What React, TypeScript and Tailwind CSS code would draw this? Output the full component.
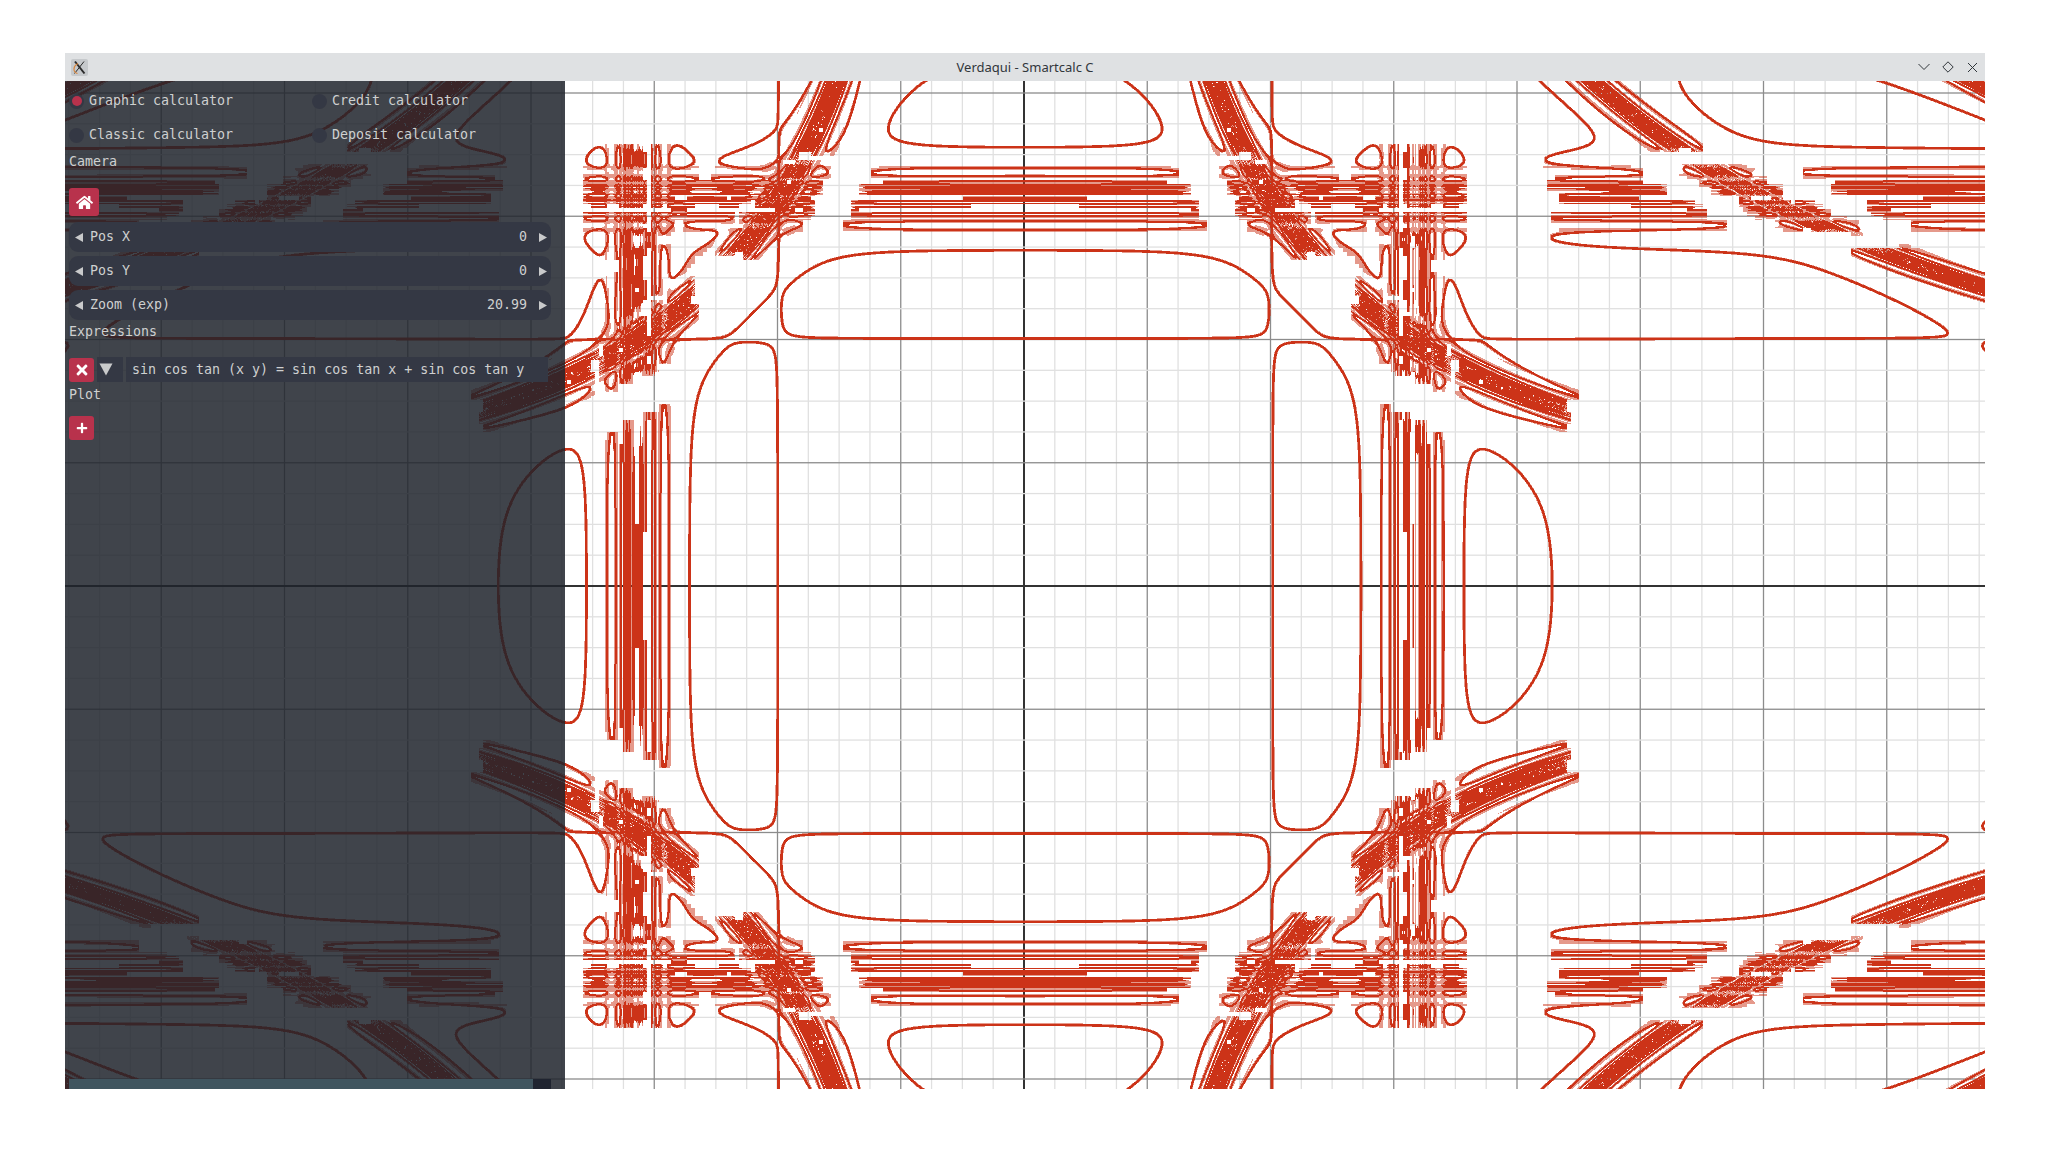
import React, { useMemo } from 'react';
import { FaHome, FaTimes, FaPlus } from 'react-icons/fa';

const WIDTH = 1920;
const HEIGHT = 1008;
const ORIGIN_X = 959;
const ORIGIN_Y = 505;
const CURVE_X = 960.2;
const SCALE = 246.5;
const LINE_HALF = 1.4;
const CELL = 4;
const PALE_GRADIENT = 0.2;
const LEVELS = [0.5, 1];

const sct = (v: number) => Math.sin(Math.cos(Math.tan(v)));
const equation = (x: number, y: number) => sct(x * y) - sct(x) - sct(y);

// coarse cells first (a cell with no sign change on its corners is skipped),
// then value / gradient per pixel inside the cells that are left
const buildCurve = () => {
  const cols = Math.ceil(WIDTH / CELL) + 4;
  const rows = Math.ceil(HEIGHT / CELL) + 4;
  const firstCol = Math.floor(CURVE_X / CELL) + 2;
  const firstRow = Math.floor(ORIGIN_Y / CELL) + 2;
  const signs = new Int8Array((cols + 1) * (rows + 1));
  for (let b = 0; b <= rows; b++) {
    for (let a = 0; a <= cols; a++) {
      const x = ((a - firstCol) * CELL) / SCALE;
      const y = ((firstRow - b) * CELL) / SCALE;
      signs[b * (cols + 1) + a] = equation(x, y) > 0 ? 1 : 0;
    }
  }
  const active = new Uint8Array(cols * rows);
  for (let b = 0; b < rows; b++) {
    for (let a = 0; a < cols; a++) {
      const k = b * (cols + 1) + a;
      const sum = signs[k] + signs[k + 1] + signs[k + cols + 1] + signs[k + cols + 2];
      if (sum > 0 && sum < 4) active[b * cols + a] = 1;
    }
  }
  const isActive = (px: number, py: number) => {
    const a = Math.floor((px - CURVE_X) / CELL) + firstCol;
    const b = Math.floor((py - ORIGIN_Y) / CELL) + firstRow;
    return active[b * cols + a] === 1;
  };

  const w = WIDTH + 2;
  const h = HEIGHT + 2;
  const values = new Float64Array(w * h);
  for (let j = 0; j < h; j++) {
    const y = (ORIGIN_Y - (j - 0.5)) / SCALE;
    for (let i = 0; i < w; i++) {
      values[j * w + i] = equation((i - 0.5 - CURVE_X) / SCALE, y);
    }
  }
  const paths = LEVELS.map(() => [] as string[]);
  const pad = 2;
  for (let j = 1; j <= HEIGHT; j++) {
    let runLevel = -1;
    let runStart = 0;
    for (let i = 1; i <= WIDTH + 1; i++) {
      let level = -1;
      if (i <= WIDTH) {
        const px = i - 0.5;
        const py = j - 0.5;
        if (
          isActive(px - pad, py - pad) ||
          isActive(px + pad, py - pad) ||
          isActive(px - pad, py + pad) ||
          isActive(px + pad, py + pad)
        ) {
          const k = j * w + i;
          const v = values[k];
          const fx = (values[k + 1] - values[k - 1]) / 2;
          const fy = (values[k + w] - values[k - w]) / 2;
          const grad = Math.sqrt(fx * fx + fy * fy);
          const alpha = LINE_HALF + 0.5 - Math.abs(v) / (grad + 1e-9);
          const crosses = v * values[k + 1] < 0 || v * values[k - 1] < 0 || v * values[k + w] < 0 || v * values[k - w] < 0;
          if (alpha >= 0.75 || crosses) level = 1;
          else if (alpha >= 0.25 || grad > PALE_GRADIENT) level = 0;
        }
      }
      if (level !== runLevel) {
        if (runLevel >= 0) {
          paths[runLevel].push(`M${runStart - 1} ${j - 1}h${i - runStart}v1h${runStart - i}z`);
        }
        runLevel = level;
        runStart = i;
      }
    }
  }
  return paths.map((p) => p.join(''));
};

const gridLines = (origin: number, size: number) => {
  const lines: { pos: number; index: number }[] = [];
  const step = (SCALE * 0.5) / 4;
  const count = Math.ceil(Math.max(origin, size) / step) + 1;
  for (let n = -count; n <= count; n++) {
    const pos = origin + n * step;
    if (pos > -2 && pos < size + 2) lines.push({ pos, index: n });
  }
  return lines;
};

const lineStyle = (index: number) => {
  if (index === 0) return { fill: '#333333', size: 2 };
  if (index % 4 === 0) return { fill: '#8c8c8c', size: 1.3 };
  return { fill: '#e0e0e0', size: 1.3 };
};

const PlotCanvas = () => {
  const curve = useMemo(buildCurve, []);
  return (
    <svg className="absolute inset-0" width={WIDTH} height={HEIGHT} viewBox={`0 0 ${WIDTH} ${HEIGHT}`}>
      {gridLines(ORIGIN_X, WIDTH).map((l) => {
        const s = lineStyle(l.index);
        return <rect key={`v${l.index}`} x={l.pos - s.size / 2} y={0} width={s.size} height={HEIGHT} fill={s.fill} />;
      })}
      {gridLines(ORIGIN_Y, HEIGHT).map((l) => {
        const s = lineStyle(l.index);
        return <rect key={`h${l.index}`} x={0} y={l.pos - s.size / 2} width={WIDTH} height={s.size} fill={s.fill} />;
      })}
      {curve.map((d, n) => (
        <path key={n} d={d} fill="#cc3318" fillOpacity={LEVELS[n]} shapeRendering="crispEdges" />
      ))}
    </svg>
  );
};

const WindowLogo = () => (
  <div className="flex h-[17px] w-[17px] items-center justify-center rounded-[2px] bg-[#c6c9cc]">
    <svg width="15" height="15" viewBox="0 0 15 15" fill="none">
      <path d="M3 1.5 L12.5 13.5" stroke="#2a2a2a" strokeWidth="2" />
      <path d="M12 1.5 L2.5 13.5" stroke="#2a2a2a" strokeWidth="1" />
      <path d="M6 3.5 C1 6 0.5 12 5.5 13.5" stroke="#d8853b" strokeWidth="1.2" />
    </svg>
  </div>
);

const TitleBar = () => (
  <div className="relative flex h-[28px] items-center justify-center bg-[#dfe1e3] pt-[1px]">
    <div className="absolute left-[6px] top-[6px]">
      <WindowLogo />
    </div>
    <span className="font-['Noto_Sans',sans-serif] text-[13px] text-[#31363b]">Verdaqui - Smartcalc C</span>
    <div className="absolute right-0 top-0 flex h-full items-center">
      <svg className="absolute right-[55px] top-[9px]" width="12" height="10" viewBox="0 0 12 10" fill="none" stroke="#31363b">
        <path d="M0.5 2 L6 7.5 L11.5 2" />
      </svg>
      <svg className="absolute right-[31px] top-[8px]" width="12" height="12" viewBox="0 0 12 12" fill="none" stroke="#31363b">
        <path d="M6 0.8 L11.2 6 L6 11.2 L0.8 6 Z" />
      </svg>
      <svg className="absolute right-[7px] top-[9px]" width="11" height="11" viewBox="0 0 11 11" fill="none" stroke="#31363b">
        <path d="M1 1 L10 10 M10 1 L1 10" />
      </svg>
    </div>
  </div>
);

const Radio = ({ label, active }: { label: string; active?: boolean }) => (
  <div className="flex h-[26px] items-center">
    <div className="flex h-[15px] w-[15px] items-center justify-center rounded-full bg-[#343844]">
      {active && <div className="h-[10px] w-[10px] rounded-full bg-[#b8324c]" />}
    </div>
    <span className="ml-[5px]">{label}</span>
  </div>
);

const Arrow = ({ dir }: { dir: 'left' | 'right' }) => (
  <svg width="8" height="9" viewBox="0 0 8 9" fill="#c9cacb">
    {dir === 'left' ? <polygon points="0,4.5 8,0 8,9" /> : <polygon points="8,4.5 0,0 0,9" />}
  </svg>
);

const Stepper = ({ label, value, className }: { label: string; value: string; className: string }) => (
  <div className={`flex h-[30px] w-[482px] items-center rounded-[9px] bg-[#343844] pl-[6px] pr-[4px] ${className}`}>
    <Arrow dir="left" />
    <span className="ml-[7px]">{label}</span>
    <span className="ml-auto">{value}</span>
    <span className="ml-[12px]">
      <Arrow dir="right" />
    </span>
  </div>
);

const RedButton = ({ children, className }: { children: React.ReactNode; className: string }) => (
  <div className={`flex items-center justify-center rounded-[3px] bg-[#b8324c] text-white ${className}`}>{children}</div>
);

const SidePanel = () => (
  <div className="relative flex h-full w-[500px] flex-col bg-[#1f232c]/[0.85] pl-[4px] pt-[7px] font-['DejaVu_Sans_Mono',monospace] text-[13.3px] leading-[16px] text-[#cfd0d0]">
    <div className="grid grid-cols-[243px_1fr] gap-y-[8px]">
      <Radio label="Graphic calculator" active />
      <Radio label="Credit calculator" />
      <Radio label="Classic calculator" />
      <Radio label="Deposit calculator" />
    </div>
    <div className="mt-[6px] h-[16px]">Camera</div>
    <RedButton className="mt-[18px] h-[28px] w-[30px]">
      <FaHome size={17} />
    </RedButton>
    <Stepper label="Pos X" value="0" className="mt-[6px]" />
    <Stepper label="Pos Y" value="0" className="mt-[4px]" />
    <Stepper label="Zoom (exp)" value="20.99" className="mt-[4px]" />
    <div className="mt-[4px] h-[16px]">Expressions</div>
    <div className="mt-[17px] flex h-[25px] items-center">
      <RedButton className="h-[24px] w-[25px]">
        <FaTimes size={16} />
      </RedButton>
      <div className="ml-[3px] flex h-[25px] w-[26px] items-start justify-start bg-[#343844] pl-[2px] pt-[6px]">
        <svg width="14" height="13" viewBox="0 0 14 13" fill="#c9cacb">
          <polygon points="0.5,0.5 13.5,0.5 7,12.5" />
        </svg>
      </div>
      <div className="ml-[3px] flex h-[25px] w-[422px] items-center bg-[#343844] pl-[6px]">
        sin cos tan (x y) = sin cos tan x + sin cos tan y
      </div>
    </div>
    <div className="mt-[5px] h-[16px]">Plot</div>
    <RedButton className="mt-[13px] h-[24px] w-[25px]">
      <FaPlus size={12} />
    </RedButton>
    <div className="mt-auto flex h-[10px] w-[482px]">
      <div className="h-full flex-1 bg-[#40555f]" />
      <div className="h-full w-[18px] bg-[#1f2430]" />
    </div>
  </div>
);

export default function App() {
  return (
    <div className="h-screen w-full overflow-hidden bg-white pl-[65px] pt-[53px]">
      <div className="flex w-[1920px] flex-col">
        <TitleBar />
        <div className="relative h-[1008px] overflow-hidden bg-white">
          <PlotCanvas />
          <SidePanel />
        </div>
      </div>
    </div>
  );
}
